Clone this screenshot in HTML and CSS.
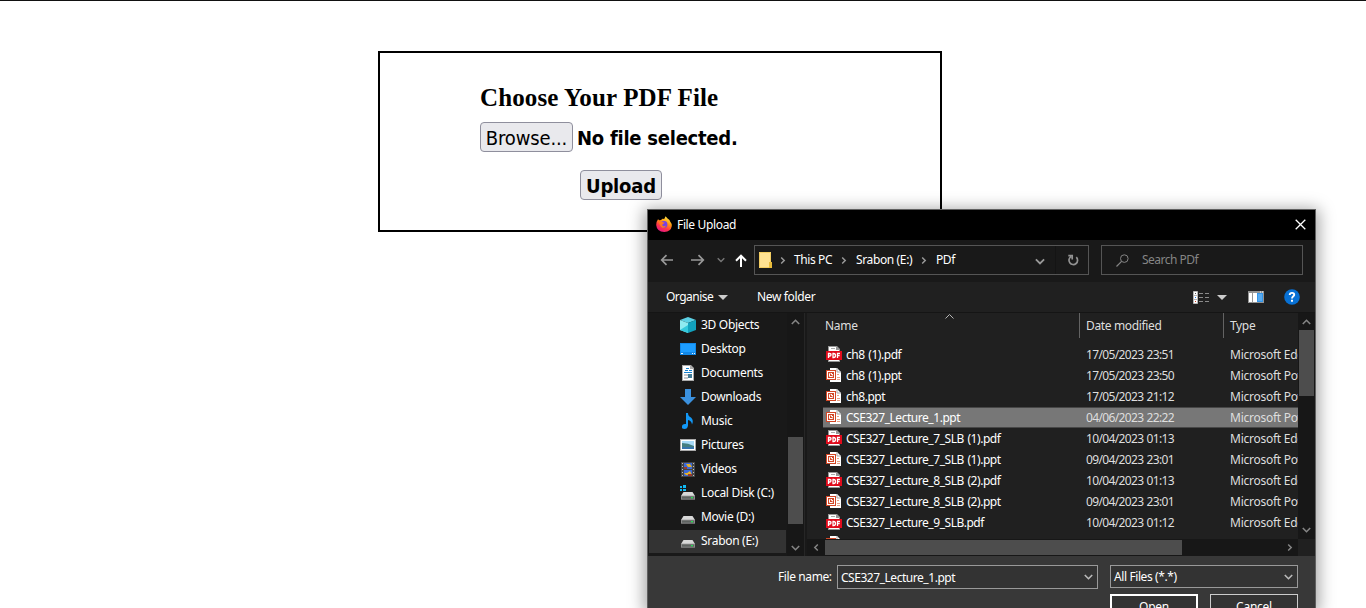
FILE: index.html
```html
<!DOCTYPE html>
<html lang="en">
<head>
<meta charset="utf-8">
<title>File Upload</title>
<link rel="stylesheet" href="styles.css">
</head>
<body>
<svg class="defs" width="0" height="0">
  <symbol id="down" viewBox="0 0 9 6"><path d="M.8 1 4.5 4.7 8.2 1" fill="none" stroke="currentColor" stroke-width="1.6"/></symbol>
  <symbol id="right" viewBox="0 0 6 9"><path d="M1.2 1.5 4.2 4.5 1.2 7.5" fill="none" stroke="currentColor" stroke-width="1.5"/></symbol>
  <symbol id="pdf" viewBox="0 0 16 16"><path d="M2 0h9l3 3v13H2z" fill="#969696"/><path d="M3 1h7v3h3v11H3z" fill="#fff"/><path d="M5 2h4v1H5z" fill="#aaa"/><path d="M0 5h16v9H0z" fill="#e00b1c"/><path d="M2.500 12V7.500h1.200q1.300 0 1.300 1.200T3.700 10H2.500M7 7.500V11.500h.600q1.900 0 1.900-2t-1.900-2zM11.500 12V7.500H14M11.500 9.700h2.200" fill="none" stroke="#fff" stroke-width="1.300"/></symbol>
  <symbol id="ppt" viewBox="0 0 16 16"><path d="M4 1h7l4 4v10H4z" fill="#fff"/><path d="M11 1v4h4" fill="none" stroke="#a5a5a5"/><path d="M11 7.500h2M11 10.500h3M11 12.500h3" stroke="#e9a083"/><path d="M0 3h10v10H0z" fill="#d24726"/><path d="M1 4h8v8H1z" fill="#fff"/><path d="M2 5h6v6H2z" fill="#d24726"/><path d="M4.500 6.500H3.500v3H6.500V8.500M5.500 6v1.500H7" fill="none" stroke="#fff"/></symbol>
  <symbol id="drive" viewBox="0 0 16 16"><path d="M3.5 6h9L15 10H1z" fill="#d8d8d8"/><path d="M1 9.7h14v4H1z" fill="#8b8b8b"/><path d="M2 10.5h12v2.2H2z" fill="#5e6260"/><path d="M11 11h2v1.2h-2z" fill="#24e052"/></symbol>
</svg>
<main class="page">
  <form class="upload">
    <h2 class="heading">Choose Your PDF File</h2>
    <div class="picker"><span class="btn browse">Browse...</span><span class="status">No file selected.</span></div>
    <span class="btn submit">Upload</span>
  </form>
</main>
<section class="dialog">
  <header class="titlebar">
    <svg class="fox" viewBox="0 0 16 16"><defs><linearGradient id="fire" x1=".8" y1="0" x2=".3" y2="1"><stop stop-color="#fff44f"/><stop offset=".4" stop-color="#ff980e"/><stop offset=".7" stop-color="#ff3647"/><stop offset="1" stop-color="#e31587"/></linearGradient></defs><path d="M2 3.2 3.3 4.3 5 4 6.5 2.8 8.2 3 9.6.2 11.3 2.2 13.5 4 14 5.2Q16 7.5 15.8 10 15 15.7 8.3 16 .8 15.7.2 9 .2 5.5 2 3.2" fill="url(#fire)"/><circle cx="8" cy="8.4" r="3.4" fill="#7542e5"/><path d="M3 5.5Q5 4.5 7 6.2L8.7 6.7 7 8Q5.7 8.5 6.5 9.8 8 11 10 9.5 9 12.5 6.2 11.7 3.5 10 3 5.5" fill="#ff7a1c"/></svg>
    <span class="t title">File Upload</span>
    <svg class="close" viewBox="0 0 11 11"><path d="M.7.7l9.6 9.6M10.3.7.7 10.3" stroke="#fff" stroke-width="1.3"/></svg>
  </header>
  <div class="navbar">
    <svg class="arrow back" viewBox="0 0 14 12"><path d="M13 6H2M6.5 1.2 1.7 6l4.8 4.8" fill="none" stroke="currentColor" stroke-width="1.7"/></svg>
    <svg class="arrow fwd" viewBox="0 0 14 12"><path d="M0 6h12M7.5 1.2 12.3 6l-4.8 4.8" fill="none" stroke="currentColor" stroke-width="1.7"/></svg>
    <svg class="recent"><use href="#down"/></svg>
    <svg class="up" viewBox="0 0 12 13"><path d="M6 13V2M1 6.7 6 1.7l5 5" fill="none" stroke="#fff" stroke-width="2"/></svg>
    <div class="address">
      <svg class="folder" viewBox="0 0 13 16"><path d="M0 0h12v10h1v6H0z" fill="#ffe292"/><path d="M.5.5h11v15H.5z" fill="none" stroke="#f3cd61"/><path d="M10 10h3v6h-3z" fill="#e8bb3b"/></svg>
      <svg class="crumb-sep c1"><use href="#right"/></svg><span class="t c-pc">This PC</span>
      <svg class="crumb-sep"><use href="#right"/></svg><span class="t c-drive">Srabon (E:)</span>
      <svg class="crumb-sep"><use href="#right"/></svg><span class="t c-pdf">PDf</span>
      <svg class="addr-drop"><use href="#down"/></svg>
      <span class="refresh"><svg viewBox="0 0 12 12"><path d="M1.300 1.700H5.200V5.500M4 2.600A4.300 4.300 0 1 0 9.300 3.200" fill="none" stroke="#929292" stroke-width="1.700"/></svg></span>
    </div>
    <div class="search"><svg viewBox="0 0 13 13"><circle cx="8.3" cy="4.6" r="3.8" fill="none" stroke="#858585"/><path d="M5.6 7.4.5 12.5" stroke="#858585" stroke-width="1.2"/></svg><span class="t c-search">Search PDf</span></div>
  </div>
  <div class="toolbar">
    <span class="t c-org">Organise</span><i class="tri"></i><span class="t c-new">New folder</span>
    <svg class="view" viewBox="0 0 17 13"><path d="M.5.5h4v12h-4zM.5 4.5h4M.5 8.5h4" fill="#fff" stroke="#b7b7b7"/><path d="M2 2h1v1H2z" fill="#555"/><path d="M2 6h1v1H2z" fill="#1878e8"/><path d="M2 10h1v1H2z" fill="#d13b1e"/><path d="M6 2.5h4M12 2.5h4M6 6.5h4M12 6.5h4M6 10.5h4M12 10.5h4" stroke="#8b8b8b"/></svg>
    <i class="tri tri2"></i>
    <svg class="pane" viewBox="0 0 16 12"><path d="M0 0h16v12H0z" fill="#949494"/><path d="M1 2h3v9H1zM5 2H9v9H5z" fill="#fff"/><path d="M9 2H15v9H9z" fill="#3394e7"/><path d="M10 3h4v7h-4z" fill="#57aaf0"/><path d="M12 .5h1v1h-1zM14 .5h1v1h-1z" fill="#fff"/></svg>
    <svg class="help" viewBox="0 0 16 16"><circle cx="8" cy="8" r="7.8" fill="#0871d5"/><path d="M5.700 6Q5.800 3.900 8 3.900T10.200 5.700C10.200 7.400 8 7.300 8 9.600" fill="none" stroke="#fff" stroke-width="1.900"/><path d="M7 10.800h2v2H7z" fill="#fff"/></svg>
  </div>
  <div class="body">
    <nav class="places">
      <ul class="place-list">
        <li><svg viewBox="0 0 16 16"><path d="M0 3 8 0l8 3-8 3z" fill="#5cd0e4"/><path d="M0 3 8 6v10L0 13z" fill="#8eeaf0"/><path d="M0 13 8 8v8z" fill="#34c9dc"/><path d="M16 3 8 6v10l8-3z" fill="#12a1bd"/></svg><span class="t">3D Objects</span></li>
        <li><svg viewBox="0 0 16 16"><path d="M0 2h16v12H0z" fill="#1188e8"/><path d="M1 3h14v8H1z" fill="#1d9dff"/><path d="M1 12.500h2M12 12.500h1M14 12.500h1" stroke="#e4f5ff"/></svg><span class="t">Desktop</span></li>
        <li><svg viewBox="0 0 16 16"><path d="M2 0h9l3 3v13H2z" fill="#aaa"/><path d="M3 1h7v3h3v11H3z" fill="#fff"/><path d="M6 3.500h3M5 5.500h3M9 5.500h3M4 7.500h8" stroke="#1580cf"/><path d="M4 10h8M4 13h4" stroke="#8b9199"/><path d="M8 9h4v4H8z" fill="#437b96"/></svg><span class="t">Documents</span></li>
        <li><svg viewBox="0 0 16 16"><path d="M5 0h6v8h5l-8 8-8-8h5z" fill="#3b91de"/></svg><span class="t">Downloads</span></li>
        <li><svg viewBox="0 0 16 16"><path d="M6 0h2q0 3 3 4.500 3 3 1 7-.5-4-4-4.500v5.500Q7.500 16 4.500 16T2 13.500Q2 10.500 6 11z" fill="#1297f5"/></svg><span class="t">Music</span></li>
        <li><svg viewBox="0 0 16 16"><path d="M0 2h16v12H0z" fill="#aaa"/><path d="M1 3h14v10H1z" fill="#fff"/><path d="M2 4h12v8H2z" fill="#a7daf8"/><path d="M2 6q6 0 12 3v3H2z" fill="#457f82"/><path d="M2 10h12v2H2z" fill="#3775ae"/></svg><span class="t">Pictures</span></li>
        <li><svg viewBox="0 0 16 16"><path d="M1 1h14v15H1z" fill="#454545"/><path d="M2.500 2v14M13.500 2v14" stroke="#bcbcbc" stroke-dasharray="1 2"/><path d="M4 2h8v6H4zM4 9h8v6H4z" fill="#3a69d9"/><path d="M6 3h4l2 3H8zM4 12h3l3-2 2 4H6z" fill="#e4b02b"/><path d="M4 6h3v2H4zM8 13h4v2H8z" fill="#963b30"/></svg><span class="t">Videos</span></li>
        <li><svg viewBox="0 0 16 16"><use href="#drive" y="1"/><path d="M0 1h2v2H0zM3 0h3v3H3zM0 4h2v2H0zM3 4h3v2H3z" fill="#10b9f4"/></svg><span class="t">Local Disk (C:)</span></li>
        <li><svg viewBox="0 0 16 16"><use href="#drive" y="1"/></svg><span class="t">Movie (D:)</span></li>
        <li class="current"><svg viewBox="0 0 16 16"><use href="#drive" y="1"/></svg><span class="t">Srabon (E:)</span></li>
      </ul>
      <div class="vbar side"><svg class="flip"><use href="#down"/></svg><i class="thumb"></i><svg><use href="#down"/></svg></div>
    </nav>
    <div class="files">
      <div class="pane-main">
        <div class="columns"><span class="t">Name</span><svg class="sort" viewBox="0 0 9 5"><path d="M.5 4.500l4-4 4 4" fill="none" stroke="#b5b5b5"/></svg><span class="t col">Date modified</span><span class="t col last">Type</span></div>
        <div class="rows">
          <div class="row"><svg><use href="#pdf"/></svg><span class="t f">ch8 (1).pdf</span><span class="t d">17/05/2023 23:51</span><span class="t k">Microsoft Edge</span></div>
          <div class="row"><svg><use href="#ppt"/></svg><span class="t f">ch8 (1).ppt</span><span class="t d">17/05/2023 23:50</span><span class="t k">Microsoft PowerPoint</span></div>
          <div class="row"><svg><use href="#ppt"/></svg><span class="t f">ch8.ppt</span><span class="t d">17/05/2023 21:12</span><span class="t k">Microsoft PowerPoint</span></div>
          <div class="row selected"><svg><use href="#ppt"/></svg><span class="t f">CSE327_Lecture_1.ppt</span><span class="t d">04/06/2023 22:22</span><span class="t k">Microsoft PowerPoint</span></div>
          <div class="row"><svg><use href="#pdf"/></svg><span class="t f">CSE327_Lecture_7_SLB (1).pdf</span><span class="t d">10/04/2023 01:13</span><span class="t k">Microsoft Edge</span></div>
          <div class="row"><svg><use href="#ppt"/></svg><span class="t f">CSE327_Lecture_7_SLB (1).ppt</span><span class="t d">09/04/2023 23:01</span><span class="t k">Microsoft PowerPoint</span></div>
          <div class="row"><svg><use href="#pdf"/></svg><span class="t f">CSE327_Lecture_8_SLB (2).pdf</span><span class="t d">10/04/2023 01:13</span><span class="t k">Microsoft Edge</span></div>
          <div class="row"><svg><use href="#ppt"/></svg><span class="t f">CSE327_Lecture_8_SLB (2).ppt</span><span class="t d">09/04/2023 23:01</span><span class="t k">Microsoft PowerPoint</span></div>
          <div class="row"><svg><use href="#pdf"/></svg><span class="t f">CSE327_Lecture_9_SLB.pdf</span><span class="t d">10/04/2023 01:12</span><span class="t k">Microsoft Edge</span></div>
          <div class="row"><svg><use href="#ppt"/></svg></div>
        </div>
      </div>
      <div class="vbar list"><svg class="flip"><use href="#down"/></svg><i class="thumb"></i><svg><use href="#down"/></svg></div>
      <div class="hbar"><svg class="mirror"><use href="#right"/></svg><i class="hthumb"></i><svg><use href="#right"/></svg></div>
      <div class="corner"></div>
    </div>
  </div>
  <footer class="footer">
    <span class="t label">File name:</span>
    <div class="field name"><span class="t">CSE327_Lecture_1.ppt</span><svg><use href="#down"/></svg></div>
    <div class="choices">
      <div class="field filter"><span class="t">All Files (*.*)</span><svg><use href="#down"/></svg></div>
      <div class="actions"><span class="action open t">Open</span><span class="action t">Cancel</span></div>
    </div>
  </footer>
</section>
</body>
</html>
```
FILE: styles.css
```css
* { box-sizing: border-box; }
body { margin: 0; width: 1366px; height: 608px; overflow: hidden; background: #fff; position: relative; }
svg { display: block; flex: none; }
.defs { position: absolute; }
.page { border-top: 1px solid #111; padding: 50px 0 0 378px; }
.upload { width: 564px; height: 181px; border: 2px solid #000; padding: 30px 0 0 100px; }
.heading { margin: 0 0 10px; height: 29px; font: bold 25px/29px "Liberation Serif", serif; letter-spacing: .12px; white-space: nowrap; }
.picker { display: flex; gap: 4px; height: 30px; margin-bottom: 18px; }
.btn { display: block; height: 30px; border: 1px solid #8f8f9d; border-radius: 4px; background: #e9e9ed; text-align: center; font: 20px/30px "DejaVu Sans Condensed", "DejaVu Sans", sans-serif; font-stretch: condensed; white-space: nowrap; }
.browse { width: 93px; letter-spacing: -.15px; }
.status { font: bold 20px/32px "DejaVu Sans Condensed", "DejaVu Sans", sans-serif; font-stretch: condensed; letter-spacing: -.25px; white-space: nowrap; }
.submit { width: 82px; margin-left: 100px; font-weight: bold; letter-spacing: -.15px; }

.dialog { position: absolute; left: 647px; top: 209px; width: 669px; height: 399px; overflow: hidden; border: 1px solid #606060; border-bottom: 0; background: #191919; color: #fff; box-shadow: 0 3px 15px 3px rgba(0,0,0,.36); }
.t { font: 12px/20px "Noto Sans", sans-serif; letter-spacing: -.25px; white-space: nowrap; }
.titlebar { display: flex; align-items: center; height: 30px; background: #000; padding: 0 9px 2px 8px; }
.fox { width: 16px; height: 16px; margin-right: 5px; }
.title { padding-top: 2px; letter-spacing: -.35px; }
.close { width: 11px; height: 11px; margin-left: auto; }
.navbar { display: flex; align-items: center; height: 42px; padding: 0 12px; }
.arrow { width: 14px; height: 12px; margin-top: -2px; color: #999; }
.back { margin-right: 17px; }
.recent { width: 8px; height: 6px; margin: -2px 10px 0 12px; color: #777; }
.up { width: 12px; height: 13px; margin: -1px 7px 0 0; }
.address { display: flex; flex: none; align-items: center; width: 335px; height: 30px; border: 1px solid #555; margin-top: -2px; padding-left: 4px; }
.folder { width: 13px; height: 16px; margin-top: -1px; }
.crumb-sep { width: 6px; height: 9px; color: #999; margin: 1px 9px 0 9px; }
.c1 { margin: 1px 8px 0 8px; }
.c-pc { width: 38px; }
.c-drive { width: 56px; letter-spacing: -.37px; }
.c-pc, .c-pdf { letter-spacing: -.4px; }
.addr-drop { width: 10px; height: 7px; color: #999; margin: 2px 10px 0 auto; }
.refresh { width: 33px; height: 28px; border-left: 1px solid #141414; padding: 8px 11px; }
.refresh svg { width: 12px; height: 12px; }
.search { display: flex; flex: none; align-items: center; width: 202px; height: 30px; border: 1px solid #555; margin: -2px 0 0 12px; padding-left: 14px; gap: 13px; color: #858585; }
.c-search { letter-spacing: -.5px; }
.search svg { width: 13px; height: 13px; }
.toolbar { display: flex; align-items: center; height: 30px; background: #202020; padding: 0 15px 0 18px; }
.c-org { width: 48px; letter-spacing: -.5px; }
.c-new { letter-spacing: -.35px; }
.tri { border: 5px solid transparent; border-top-color: #ccc; border-bottom: 0; margin: 0 29px 0 4px; }
.view { width: 17px; height: 13px; margin: 0 7px 0 auto; }
.tri2 { margin: 1px 21px 0 0; }
.pane { width: 16px; height: 12px; margin-right: 20px; }
.help { width: 16px; height: 16px; }
.body { display: flex; height: 244px; border-top: 1px solid #151515; }
.places { display: flex; width: 157px; border-right: 1px solid #262626; }
.place-list { list-style: none; margin: 0; padding: 0 0 0 1px; width: 139px; }
.place-list li { display: flex; align-items: center; gap: 5px; width: 137px; height: 24px; padding-left: 31px; }
.place-list svg { width: 16px; height: 16px; }
.place-list .t { letter-spacing: -.3px; }
.place-list .current { background: #333; height: 23px; margin-top: 1px; padding-bottom: 1px; }
.vbar { display: flex; flex-direction: column; align-items: center; width: 17px; background: #171717; color: #858585; padding: 6px 0; }
.vbar svg { width: 9px; height: 6px; }
.flip { transform: scaleY(-1); }
.mirror { transform: scaleX(-1); }
.thumb { width: 15px; background: #4d4d4d; margin-bottom: auto; }
.side .thumb { margin-top: 112px; height: 87px; }
.side { padding-bottom: 5px; }
.files { display: grid; grid-template-columns: 491px 17px; grid-template-rows: 226px 17px; margin-left: 2px; width: 508px; }
.pane-main { background: #202020; overflow: hidden; }
.columns { display: flex; height: 25px; padding-left: 18px; color: #dedede; }
.columns .t { line-height: 26px; }
.columns .t:first-child { width: 120px; flex: none; letter-spacing: -.3px; }
.sort { width: 9px; height: 5px; margin: 1px 125px 0 0; }
.columns .col { width: 144px; border-left: 1px solid #636363; padding-left: 6px; flex: none; letter-spacing: -.35px; }
.columns .last { width: 75px; }
.rows { padding: 6px 0 0 16px; }
.row { display: flex; align-items: center; height: 21px; padding-left: 3px; }
.row svg { width: 16px; height: 16px; margin: -1px 4px 0 0; }
.f { width: 240px; flex: none; letter-spacing: -.46px; word-spacing: 1px; }
.d { width: 144px; color: #dedede; flex: none; letter-spacing: -.65px; word-spacing: .8px; }
.k { color: #dedede; flex: none; }
.selected { background: #777; box-shadow: inset 0 1px #474747, inset 0 -1px #474747; }
.list .thumb { margin-top: 5px; height: 66px; }
.hbar { display: flex; align-items: center; background: #171717; color: #858585; padding: 0 5px 0 6px; }
.hbar svg { width: 6px; height: 9px; }
.hthumb { width: 357px; height: 15px; background: #4d4d4d; margin: 0 auto 0 6px; }
.corner { background: #202020; }
.footer { display: flex; background: #383838; height: 52px; padding: 9px 17px 0 130px; }
.label { width: 59px; line-height: 24px; letter-spacing: -.4px; }
.field { display: flex; justify-content: space-between; align-items: center; border: 1px solid #999; background: #333; padding: 0 4px 0 3px; }
.field svg { width: 9px; height: 6px; color: #bbb; }
.name { width: 261px; height: 24px; margin-right: 12px; }
.name .t { padding-top: 1px; letter-spacing: -.46px; }
.filter .t { letter-spacing: -.4px; }
.choices { width: 188px; }
.filter { height: 23px; }
.actions { display: flex; gap: 12px; margin-top: 6px; }
.action { width: 88px; height: 27px; border: 1px solid #ccc; background: #333; text-align: center; line-height: 24px; }
.open { border: 2px solid #fff; line-height: 22px; }
```
